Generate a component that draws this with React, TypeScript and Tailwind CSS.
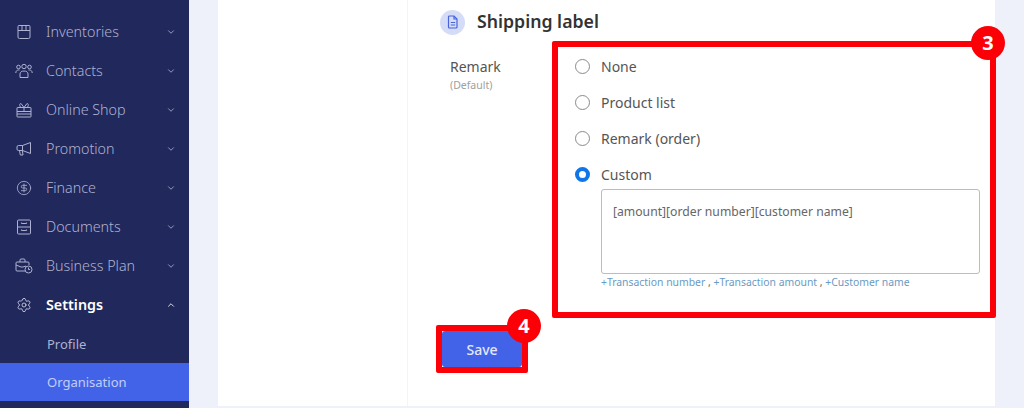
import React from "react";
import { ChevronDown, ChevronUp, CircleDollarSign, Settings } from "lucide-react";

const font = "font-['Noto_Sans','Inter',sans-serif]";

function BoxIcon() {
  return (
    <svg viewBox="0 0 16 16" className="h-4 w-4" fill="none" stroke="currentColor" strokeWidth="1">
      <path d="M3 1.500h10a1 1 0 0 1 1 1V13a1.500 1.500 0 0 1-1.500 1.500h-9A1.500 1.500 0 0 1 2 13V2.500a1 1 0 0 1 1-1z" />
      <path d="M2 6.500h12M6 1.500v5M10 1.500v5" />
    </svg>
  );
}

function GroupIcon() {
  return (
    <svg viewBox="0 0 18 16" className="h-4 w-[18px]" fill="none" stroke="currentColor" strokeWidth="1">
      <circle cx="3.500" cy="4" r="1.800" />
      <circle cx="9" cy="3.500" r="2.200" />
      <circle cx="14.500" cy="4" r="1.800" />
      <path d="M.8 10c0-2 1.200-3 2.700-3h1M17.200 10c0-2-1.200-3-2.700-3h-1" />
      <path d="M5 14.500v-3.500c0-2 1.600-3 4-3s4 1 4 3v3.500z" />
    </svg>
  );
}

function GiftIcon() {
  return (
    <svg viewBox="0 0 16 16" className="h-4 w-4" fill="none" stroke="currentColor" strokeWidth="1">
      <rect x="1" y="5.500" width="14" height="9.500" rx="0.500" />
      <path d="M1 9.500h14M1 12h14M8 5.500 5 1.500C3.500 1.500 3 4 5 5.500M8 5.500l3-4c1.500 0 2 2.500 0 4M8 5.500V9.500" />
    </svg>
  );
}

function MegaphoneIcon() {
  return (
    <svg viewBox="0 0 16 16" className="h-4 w-4" fill="none" stroke="currentColor" strokeWidth="1">
      <path d="M6.500 4.500 14.500 1.500V12.500L6.500 9.500H2.500a1.500 1.500 0 0 1-1.500-1.500V6a1.500 1.500 0 0 1 1.500-1.500z" />
      <path d="M6.500 4.500v5M3.500 9.500l.8 4.500h2.700l-.7-4.500" />
    </svg>
  );
}

function CabinetIcon() {
  return (
    <svg viewBox="0 0 16 16" className="h-4 w-4" fill="none" stroke="currentColor" strokeWidth="1">
      <rect x="1.500" y="1" width="13" height="14" rx="1" />
      <path d="M1.500 8h13M5.500 3.500v1h5v-1M5.500 10.500v1h5v-1" />
    </svg>
  );
}

function BriefcaseClockIcon() {
  return (
    <svg viewBox="0 0 18 16" className="h-4 w-[18px]" fill="none" stroke="currentColor" strokeWidth="1">
      <path d="M10 13H2a1 1 0 0 1-1-1V5a1 1 0 0 1 1-1h11a1 1 0 0 1 1 1v2" />
      <path d="M5 4V2a1 1 0 0 1 1-1h3a1 1 0 0 1 1 1v2M1 7l5 2h2l3-1" />
      <circle cx="13.500" cy="11.500" r="3.500" />
      <path d="M13.500 9.500v2h1.500" />
    </svg>
  );
}

function DocIcon() {
  return (
    <svg viewBox="0 0 14 14" className="h-[14px] w-[14px]" fill="none" stroke="#4a63d8" strokeWidth="1.200">
      <path d="M3.500 1h4.500l3 3v8a1 1 0 0 1-1 1h-6.500a1 1 0 0 1-1-1V2a1 1 0 0 1 1-1z" />
      <path d="M8 1v3h3M4.800 7.500h4.400M4.800 10h4.400" />
    </svg>
  );
}

const items = [
  { label: "Inventories", icon: <BoxIcon /> },
  { label: "Contacts", icon: <GroupIcon /> },
  { label: "Online Shop", icon: <GiftIcon /> },
  { label: "Promotion", icon: <MegaphoneIcon /> },
  { label: "Finance", icon: <CircleDollarSign className="h-4 w-4" strokeWidth={1.25} /> },
  { label: "Documents", icon: <CabinetIcon /> },
  { label: "Business Plan", icon: <BriefcaseClockIcon /> },
];

function Sidebar() {
  return (
    <aside className="w-[189px] shrink-0 bg-[#21285c] pt-[12px] text-[#aeb2d0]">
      {items.map((item) => (
        <div key={item.label} className="flex h-[39px] items-center pl-[15px] pr-[13px]">
          <span className="flex w-[18px] justify-center">{item.icon}</span>
          <span className="ml-[13px] flex-1 text-[14.300px] font-light">{item.label}</span>
          <ChevronDown className="h-[10px] w-[10px]" strokeWidth={2} />
        </div>
      ))}
      <div className="flex h-[39px] items-center pl-[15px] pr-[13px] text-white">
        <span className="flex w-[18px] justify-center">
          <Settings className="h-4 w-4 text-[#d5d7e6]" strokeWidth={1.25} />
        </span>
        <span className="ml-[13px] flex-1 text-[14.300px] font-semibold">Settings</span>
        <ChevronUp className="h-[10px] w-[10px]" strokeWidth={2} />
      </div>
      <div className="flex h-[39px] items-center pl-[47px] pt-[2px] text-[13px]">Profile</div>
      <div className="flex h-[38px] items-center bg-[#4263e8] pl-[47px] pt-[2px] text-[13px] text-[#c3cef5]">Organisation</div>
    </aside>
  );
}

function Radio({ label, checked }: { label: string; checked?: boolean }) {
  return (
    <div className="flex h-[36px] items-center">
      {checked ? (
        <span className="h-[15px] w-[15px] rounded-full border-[4px] border-[#0f75e8] bg-white" />
      ) : (
        <span className="h-[15px] w-[15px] rounded-full border border-[#8a8a8a] bg-white" />
      )}
      <span className="ml-[11px] text-[14px] text-[#555555]">{label}</span>
    </div>
  );
}

export default function App() {
  return (
    <div className={`flex h-[408px] w-[1024px] overflow-hidden bg-[#eef1fa] ${font}`}>
      <Sidebar />
      <main className="ml-[29px] flex h-[406px] w-[777px] bg-white">
        <div className="w-[190px] shrink-0 border-r border-[#f3f4f8]" />
        <div className="relative flex-1 pl-[32px]">
          <div className="flex h-[44px] items-center">
            <span className="flex h-[25px] w-[25px] items-center justify-center rounded-full bg-[#d5dcf7]">
              <DocIcon />
            </span>
            <h2 className="ml-[12px] pb-[1px] text-[17.700px] font-semibold text-[#333333]">Shipping label</h2>
          </div>
          <div className="flex">
            <div className="w-[125px] shrink-0 pl-[10px] pt-[13px]">
              <p className="text-[14px] leading-[20px] text-[#555555]">Remark</p>
              <p className="text-[10.500px] leading-[16px] text-[#a0a0a0]">(Default)</p>
            </div>
            <div className="ml-[10px] w-[407px] pt-[4px]">
              <Radio label="None" />
              <Radio label="Product list" />
              <Radio label="Remark (order)" />
              <Radio label="Custom" checked />
              <div className="ml-[26px] mt-[-3px] h-[85px] w-[379px] rounded-[3px] border border-[#bcbcbc] px-[11px] py-[13px] text-[12.200px] text-[#666666]">
                [amount][order number][customer name]
              </div>
              <p className="ml-[26px] mt-[1px] text-[10.400px] text-[#6a9ac4]">
                +Transaction number <span className="text-[#666666]">,</span> +Transaction amount{" "}
                <span className="text-[#666666]">,</span> +Customer name
              </p>
            </div>
          </div>
          <button className="absolute left-[34px] top-[331px] h-[36px] w-[80px] rounded-[3px] bg-[#4263e8] text-[14px] font-medium text-[#e4e8fb]">
            Save
          </button>

          {/* red annotations */}
          <div className="absolute left-[144px] top-[41px] h-[277px] w-[444px] rounded-[2px] border-[6px] border-[#fb0007]" />
          <div className="absolute left-[28px] top-[325px] h-[48px] w-[92px] rounded-[2px] border-[6px] border-[#fb0007]" />
          <span className="absolute left-[563px] top-[26px] flex h-[34px] w-[34px] items-center justify-center rounded-full bg-[#fb0007] text-[20px] font-bold text-white">3</span>
          <span className="absolute left-[99px] top-[309px] flex h-[34px] w-[34px] items-center justify-center rounded-full bg-[#fb0007] text-[20px] font-bold text-white">4</span>
        </div>
      </main>
    </div>
  );
}
